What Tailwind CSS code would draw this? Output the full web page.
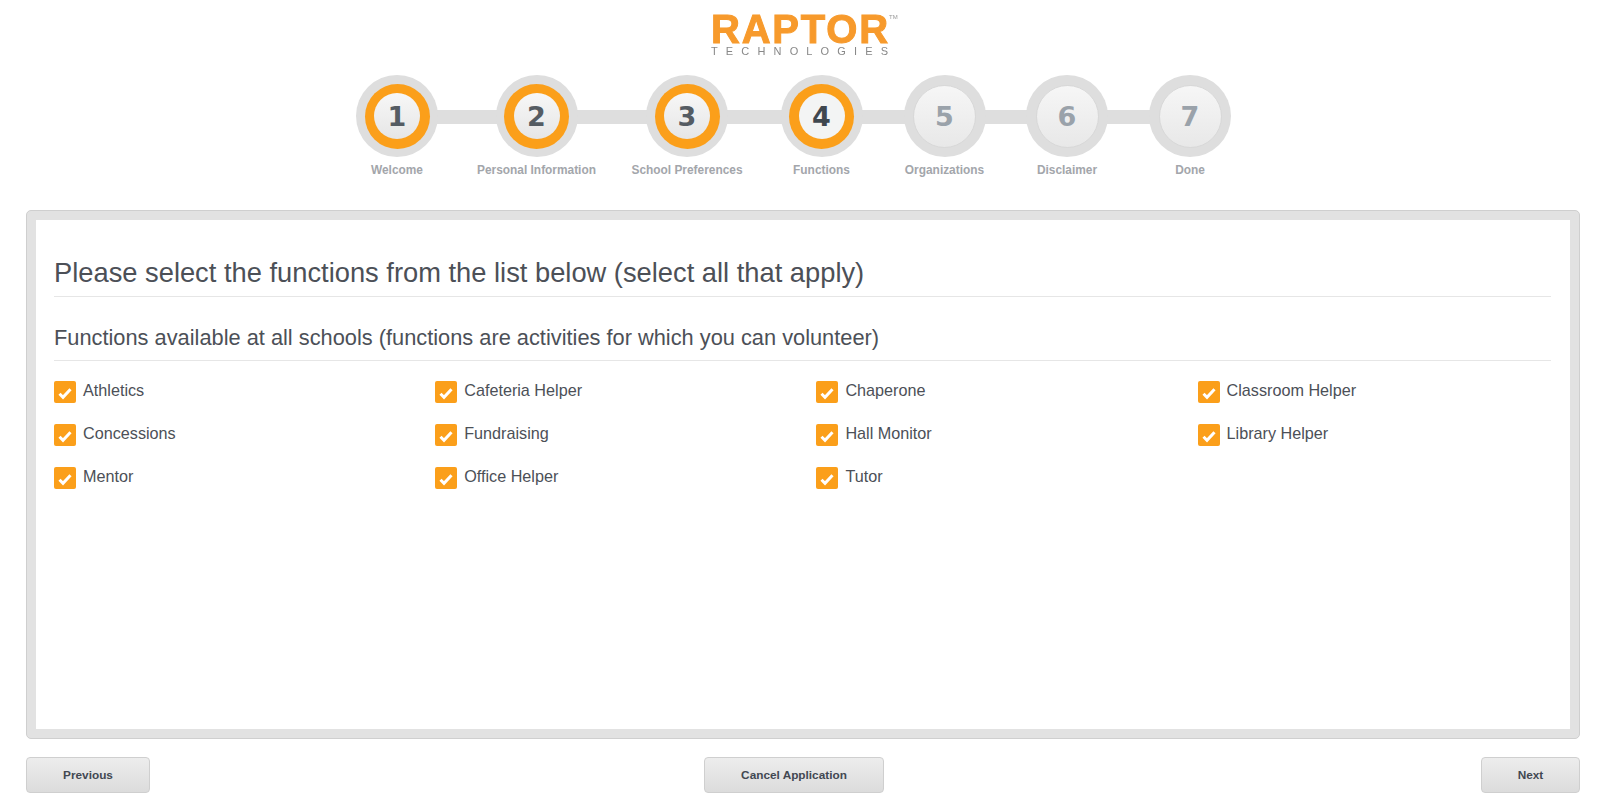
<!DOCTYPE html>
<html lang="en">

<head>
  <meta charset="UTF-8" />
  <meta name="viewport" content="width=device-width, initial-scale=1.0" />
  <title>Volunteer Application - Functions</title>
  <script src="https://cdn.jsdelivr.net/npm/@tailwindcss/browser@4"></script>
</head>

<body class="bg-white text-[#4c5057] font-['Liberation_Sans',Arial,sans-serif] h-[807px] overflow-hidden">

  <!-- logo -->
  <div class="h-[75px] pt-[12px] pl-[711px]">
    <div class="relative w-[180px] blur-[0.4px]">
      <div class="w-[176px] text-[40px] leading-[34px] font-bold text-[#f79a2c] tracking-[1.8px] [-webkit-text-stroke:1px_#f79a2c]">RAPTOR</div>
      <div class="absolute left-[178px] top-[2px] text-[6px] leading-[6px] text-[#999]">TM</div>
      <div class="text-[11px] leading-[10px] text-[#888] tracking-[8.15px] whitespace-nowrap">TECHNOLOGIES</div>
    </div>
  </div>

  <!-- steps -->
  <div class="relative flex ml-[336px] w-[915px] h-[135px] text-[11.9px]">
    <div class="absolute left-[61px] right-[61px] top-[35px] h-[14px] bg-[#dedede]"></div>

    <div class="relative w-[122px] flex flex-col items-center">
      <div class="w-[82px] h-[82px] rounded-full bg-[#dedede] flex items-center justify-center">
        <div class="w-[65px] h-[65px] rounded-full bg-[#fb9f1a] flex items-center justify-center">
          <div class="w-[46px] h-[46px] pt-[2px] rounded-full bg-linear-to-b from-[#f7f7f7] to-[#e6e6e6] flex items-center justify-center font-['DejaVu_Sans',sans-serif] text-[27px] font-bold text-[#555c63]">1</div>
        </div>
      </div>
      <div class="mt-[5px] leading-[16px] font-bold text-[#a3a6ab] whitespace-nowrap">Welcome</div>
    </div>

    <div class="relative w-[157px] flex flex-col items-center">
      <div class="w-[82px] h-[82px] rounded-full bg-[#dedede] flex items-center justify-center">
        <div class="w-[65px] h-[65px] rounded-full bg-[#fb9f1a] flex items-center justify-center">
          <div class="w-[46px] h-[46px] pt-[2px] rounded-full bg-linear-to-b from-[#f7f7f7] to-[#e6e6e6] flex items-center justify-center font-['DejaVu_Sans',sans-serif] text-[27px] font-bold text-[#555c63]">2</div>
        </div>
      </div>
      <div class="mt-[5px] leading-[16px] font-bold text-[#a3a6ab] whitespace-nowrap">Personal Information</div>
    </div>

    <div class="relative w-[144px] flex flex-col items-center">
      <div class="w-[82px] h-[82px] rounded-full bg-[#dedede] flex items-center justify-center">
        <div class="w-[65px] h-[65px] rounded-full bg-[#fb9f1a] flex items-center justify-center">
          <div class="w-[46px] h-[46px] pt-[2px] rounded-full bg-linear-to-b from-[#f7f7f7] to-[#e6e6e6] flex items-center justify-center font-['DejaVu_Sans',sans-serif] text-[27px] font-bold text-[#555c63]">3</div>
        </div>
      </div>
      <div class="mt-[5px] leading-[16px] font-bold text-[#a3a6ab] whitespace-nowrap">School Preferences</div>
    </div>

    <div class="relative w-[125px] flex flex-col items-center">
      <div class="w-[82px] h-[82px] rounded-full bg-[#dedede] flex items-center justify-center">
        <div class="w-[65px] h-[65px] rounded-full bg-[#fb9f1a] flex items-center justify-center">
          <div class="w-[46px] h-[46px] pt-[2px] rounded-full bg-[#f3f4f4] flex items-center justify-center font-['DejaVu_Sans',sans-serif] text-[27px] font-bold text-[#3f474f]">4</div>
        </div>
      </div>
      <div class="mt-[5px] leading-[16px] font-bold text-[#a3a6ab] whitespace-nowrap">Functions</div>
    </div>

    <div class="relative w-[121px] flex flex-col items-center">
      <div class="w-[82px] h-[82px] rounded-full bg-[#dedede] flex items-center justify-center">
        <div class="w-[63px] h-[63px] pt-[2px] rounded-full border border-[#d8d8d8] bg-linear-to-b from-[#f6f6f6] to-[#e8e8e8] flex items-center justify-center font-['DejaVu_Sans',sans-serif] text-[27px] font-bold text-[#9aa2aa]">5</div>
      </div>
      <div class="mt-[5px] leading-[16px] font-bold text-[#a3a6ab] whitespace-nowrap">Organizations</div>
    </div>

    <div class="relative w-[124px] flex flex-col items-center">
      <div class="w-[82px] h-[82px] rounded-full bg-[#dedede] flex items-center justify-center">
        <div class="w-[63px] h-[63px] pt-[2px] rounded-full border border-[#d8d8d8] bg-linear-to-b from-[#f6f6f6] to-[#e8e8e8] flex items-center justify-center font-['DejaVu_Sans',sans-serif] text-[27px] font-bold text-[#9aa2aa]">6</div>
      </div>
      <div class="mt-[5px] leading-[16px] font-bold text-[#a3a6ab] whitespace-nowrap">Disclaimer</div>
    </div>

    <div class="relative w-[122px] flex flex-col items-center">
      <div class="w-[82px] h-[82px] rounded-full bg-[#dedede] flex items-center justify-center">
        <div class="w-[63px] h-[63px] pt-[2px] rounded-full border border-[#d8d8d8] bg-linear-to-b from-[#f6f6f6] to-[#e8e8e8] flex items-center justify-center font-['DejaVu_Sans',sans-serif] text-[27px] font-bold text-[#9aa2aa]">7</div>
      </div>
      <div class="mt-[5px] leading-[16px] font-bold text-[#a3a6ab] whitespace-nowrap">Done</div>
    </div>
  </div>

  <!-- panel -->
  <div class="ml-[26px] w-[1554px] h-[529px] rounded-[5px] border border-[#cfcfcf] p-[9px] bg-[#e2e2e2]">
    <div class="bg-white h-full pt-[32px] pl-[18px] pr-[19px]">
      <h1 class="text-[27.3px] leading-[42px] pb-[2px] border-b border-[#e6e6e6]">Please select the functions from the list below (select all that apply)</h1>
      <h2 class="mt-[25px] text-[21.8px] leading-[32px] pb-[6px] border-b border-[#e6e6e6]">Functions available at all schools (functions are activities for which you can volunteer)</h2>

      <div class="mt-[20px] grid grid-cols-[repeat(4,381.2px)] auto-rows-[42.75px] text-[16.2px]">
        <label class="flex items-start gap-[7px]">
          <svg viewBox="0 0 22 22" class="w-[22px] h-[22px] rounded-[2px] bg-[#fb9f1a]"><path d="M5.5 12.8 9 16.3 16.5 8.2" fill="none" stroke="#fff" stroke-width="3" /></svg>
          <span class="leading-[18px]">Athletics</span>
        </label>
        <label class="flex items-start gap-[7px]">
          <svg viewBox="0 0 22 22" class="w-[22px] h-[22px] rounded-[2px] bg-[#fb9f1a]"><path d="M5.5 12.8 9 16.3 16.5 8.2" fill="none" stroke="#fff" stroke-width="3" /></svg>
          <span class="leading-[18px]">Cafeteria Helper</span>
        </label>
        <label class="flex items-start gap-[7px]">
          <svg viewBox="0 0 22 22" class="w-[22px] h-[22px] rounded-[2px] bg-[#fb9f1a]"><path d="M5.5 12.8 9 16.3 16.5 8.2" fill="none" stroke="#fff" stroke-width="3" /></svg>
          <span class="leading-[18px]">Chaperone</span>
        </label>
        <label class="flex items-start gap-[7px]">
          <svg viewBox="0 0 22 22" class="w-[22px] h-[22px] rounded-[2px] bg-[#fb9f1a]"><path d="M5.5 12.8 9 16.3 16.5 8.2" fill="none" stroke="#fff" stroke-width="3" /></svg>
          <span class="leading-[18px]">Classroom Helper</span>
        </label>
        <label class="flex items-start gap-[7px]">
          <svg viewBox="0 0 22 22" class="w-[22px] h-[22px] rounded-[2px] bg-[#fb9f1a]"><path d="M5.5 12.8 9 16.3 16.5 8.2" fill="none" stroke="#fff" stroke-width="3" /></svg>
          <span class="leading-[18px]">Concessions</span>
        </label>
        <label class="flex items-start gap-[7px]">
          <svg viewBox="0 0 22 22" class="w-[22px] h-[22px] rounded-[2px] bg-[#fb9f1a]"><path d="M5.5 12.8 9 16.3 16.5 8.2" fill="none" stroke="#fff" stroke-width="3" /></svg>
          <span class="leading-[18px]">Fundraising</span>
        </label>
        <label class="flex items-start gap-[7px]">
          <svg viewBox="0 0 22 22" class="w-[22px] h-[22px] rounded-[2px] bg-[#fb9f1a]"><path d="M5.5 12.8 9 16.3 16.5 8.2" fill="none" stroke="#fff" stroke-width="3" /></svg>
          <span class="leading-[18px]">Hall Monitor</span>
        </label>
        <label class="flex items-start gap-[7px]">
          <svg viewBox="0 0 22 22" class="w-[22px] h-[22px] rounded-[2px] bg-[#fb9f1a]"><path d="M5.5 12.8 9 16.3 16.5 8.2" fill="none" stroke="#fff" stroke-width="3" /></svg>
          <span class="leading-[18px]">Library Helper</span>
        </label>
        <label class="flex items-start gap-[7px]">
          <svg viewBox="0 0 22 22" class="w-[22px] h-[22px] rounded-[2px] bg-[#fb9f1a]"><path d="M5.5 12.8 9 16.3 16.5 8.2" fill="none" stroke="#fff" stroke-width="3" /></svg>
          <span class="leading-[18px]">Mentor</span>
        </label>
        <label class="flex items-start gap-[7px]">
          <svg viewBox="0 0 22 22" class="w-[22px] h-[22px] rounded-[2px] bg-[#fb9f1a]"><path d="M5.5 12.8 9 16.3 16.5 8.2" fill="none" stroke="#fff" stroke-width="3" /></svg>
          <span class="leading-[18px]">Office Helper</span>
        </label>
        <label class="flex items-start gap-[7px]">
          <svg viewBox="0 0 22 22" class="w-[22px] h-[22px] rounded-[2px] bg-[#fb9f1a]"><path d="M5.5 12.8 9 16.3 16.5 8.2" fill="none" stroke="#fff" stroke-width="3" /></svg>
          <span class="leading-[18px]">Tutor</span>
        </label>
      </div>
    </div>
  </div>

  <!-- footer buttons -->
  <div class="ml-[26px] w-[1554px] mt-[18px] flex text-[11.8px] font-bold text-[#424852]">
    <button class="w-[124px] h-[36px] pt-[1px] rounded-[4px] border border-[#cfcfcf] bg-linear-to-b from-[#ededed] to-[#dcdcdc]">Previous</button>
    <button class="ml-[554px] w-[180px] h-[36px] pt-[1px] rounded-[4px] border border-[#cfcfcf] bg-linear-to-b from-[#ededed] to-[#dcdcdc]">Cancel Application</button>
    <button class="ml-auto w-[99px] h-[36px] pt-[1px] rounded-[4px] border border-[#cfcfcf] bg-linear-to-b from-[#ededed] to-[#dcdcdc]">Next</button>
  </div>

</body>

</html>
